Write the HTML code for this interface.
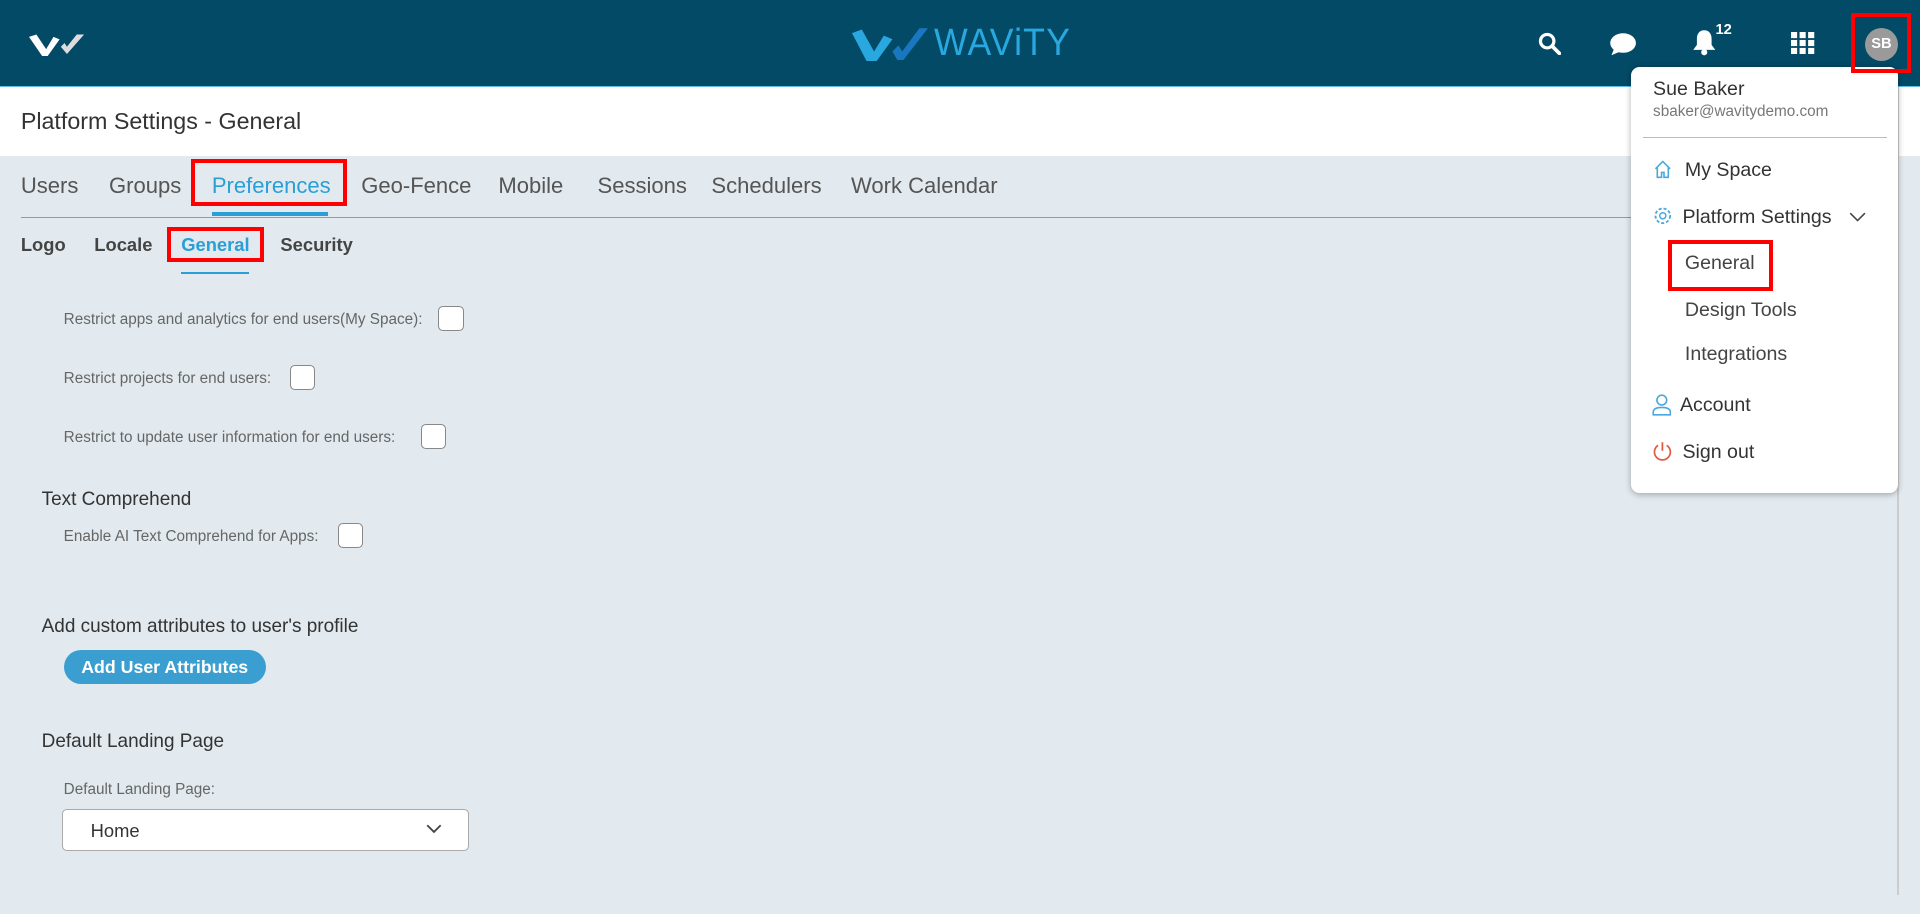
<!DOCTYPE html>
<html><head><meta charset="utf-8"><style>
html,body{margin:0;padding:0;overflow:hidden;}
body{width:1920px;height:914px;background:#e2eaef;font-family:"Liberation Sans",sans-serif;}
#w{zoom:1.22449;width:1568px;height:746px;position:relative;}
.a{position:absolute;white-space:nowrap;}
.hdr{left:0;top:0;width:1568px;height:71px;background:#034a66;border-bottom:1px solid #5bc0e8;box-sizing:border-box;}
.tb{left:0;top:71px;width:1568px;height:56px;background:#fff;}
.tab{font-size:18px;color:#555;top:141px;}
.sub{font-size:15px;color:#555;top:191px;font-weight:bold;}
.lbl{font-size:12.5px;color:#666;}
.cb{width:19px;height:19px;background:#fff;border:1px solid #888;border-radius:4px;}
.red{border:4px solid #f00;box-sizing:border-box;}
.h{font-size:15.5px;color:#333;}
.mi{font-size:16px;color:#333;}
</style></head><body><div id="w">
<div class="a hdr"></div>
<svg class="a" style="left:24px;top:26px" width="46" height="20" viewBox="0 0 46 20"><path d="M0 4l6-2 8 12 6-10 5 2-10 14h-4z" fill="#fff"/><path d="M26 12l5 6 14-16-6 0-8 10-2-3z" fill="#ddd"/></svg>
<svg class="a" style="left:696px;top:22px" width="62" height="28" viewBox="0 0 62 28"><path d="M0 5l8-3 10 18 8-13 7 3-13 18h-8z" fill="#29a8e0"/><path d="M33 20l4 7h5l20-26-7 0-14 19-3-5z" fill="#1976c0"/></svg>
<div class="a" style="left:763px;top:18px;font-size:31px;color:#29a8e0;letter-spacing:1px;transform:scaleX(0.94);transform-origin:left">WAViTY</div>
<svg class="a" style="left:1256px;top:26px" width="19" height="19" viewBox="0 0 19 19"><circle cx="7.5" cy="7.5" r="5.5" stroke="#fff" stroke-width="2.6" fill="none"/><path d="M11.5 11.5l6 6" stroke="#fff" stroke-width="3" stroke-linecap="round"/></svg>
<svg class="a" style="left:1314px;top:26px" width="23" height="20" viewBox="0 0 23 20"><ellipse cx="11.5" cy="9" rx="10.5" ry="8" fill="#fff"/><path d="M4 14l-2 5 7-3z" fill="#fff"/></svg>
<svg class="a" style="left:1382px;top:24px" width="20" height="22" viewBox="0 0 20 22"><path d="M10 1c4 0 6 3 6 7v5l3 4H1l3-4V8c0-4 2-7 6-7z" fill="#fff"/><circle cx="10" cy="19" r="2.5" fill="#fff"/></svg>
<div class="a" style="left:1401px;top:18px;font-size:12px;color:#fff;font-weight:bold">12</div>
<svg class="a" style="left:1463px;top:26px" width="19" height="18" viewBox="0 0 19 18"><g fill="#fff"><rect x="0" y="0" width="5" height="5"/><rect x="7" y="0" width="5" height="5"/><rect x="14" y="0" width="5" height="5"/><rect x="0" y="6.5" width="5" height="5"/><rect x="7" y="6.5" width="5" height="5"/><rect x="14" y="6.5" width="5" height="5"/><rect x="0" y="13" width="5" height="5"/><rect x="7" y="13" width="5" height="5"/><rect x="14" y="13" width="5" height="5"/></g></svg>
<div class="a" style="left:1523px;top:23px;width:27px;height:27px;border-radius:50%;background:#9a9a9a;color:#fff;font-size:12px;font-weight:bold;text-align:center;line-height:27px">SB</div>
<div class="a tb"></div>
<div class="a" style="left:17px;top:88px;font-size:19px;color:#333">Platform Settings - General</div>
<div class="a tab" style="left:17px">Users</div>
<div class="a tab" style="left:89px">Groups</div>
<div class="a tab" style="left:173px;color:#2a9fd6">Preferences</div>
<div class="a tab" style="left:295px">Geo-Fence</div>
<div class="a tab" style="left:407px">Mobile</div>
<div class="a tab" style="left:488px">Sessions</div>
<div class="a tab" style="left:581px">Schedulers</div>
<div class="a tab" style="left:695px">Work Calendar</div>
<div class="a" style="left:17px;top:177px;width:1533px;height:1px;background:#999"></div>
<div class="a" style="left:173px;top:173px;width:95px;height:3px;background:#2a9fd6"></div>
<div class="a red" style="left:156px;top:130px;width:127px;height:38px"></div>
<div class="a sub" style="left:17px;color:#444">Logo</div>
<div class="a sub" style="left:77px;color:#444">Locale</div>
<div class="a sub" style="left:148px;color:#2a9fd6">General</div>
<div class="a sub" style="left:229px;color:#444">Security</div>
<div class="a" style="left:148px;top:222px;width:55px;height:2px;background:#2a9fd6"></div>
<div class="a red" style="left:136px;top:185px;width:80px;height:29px"></div>
<div class="a lbl" style="left:52px;top:254px">Restrict apps and analytics for end users(My Space):</div>
<div class="a cb" style="left:358px;top:250px"></div>
<div class="a lbl" style="left:52px;top:302px">Restrict projects for end users:</div>
<div class="a cb" style="left:237px;top:298px"></div>
<div class="a lbl" style="left:52px;top:350px">Restrict to update user information for end users:</div>
<div class="a cb" style="left:344px;top:346px"></div>
<div class="a h" style="left:34px;top:399px">Text Comprehend</div>
<div class="a lbl" style="left:52px;top:431px">Enable AI Text Comprehend for Apps:</div>
<div class="a cb" style="left:276px;top:427px"></div>
<div class="a h" style="left:34px;top:503px">Add custom attributes to user's profile</div>
<div class="a" style="left:52px;top:531px;width:165px;height:28px;border-radius:14px;background:#3a9fd0;color:#fff;font-size:14.5px;font-weight:bold;text-align:center;line-height:28px">Add User Attributes</div>
<div class="a h" style="left:34px;top:597px">Default Landing Page</div>
<div class="a lbl" style="left:52px;top:638px">Default Landing Page:</div>
<div class="a" style="left:51px;top:661px;width:330px;height:32px;background:#fff;border:1px solid #aaa;border-radius:4px"></div>
<div class="a" style="left:74px;top:670px;font-size:15px;color:#333">Home</div>
<svg class="a" style="left:348px;top:673px" width="13" height="8" viewBox="0 0 13 8"><path d="M1 1l5.5 5.5L12 1" stroke="#444" stroke-width="1.5" fill="none"/></svg>
<div class="a" style="left:1549px;top:71px;width:2px;height:660px;background:#ccc"></div>
<div class="a" style="left:1332px;top:55px;width:218px;height:348px;background:#fff;border-radius:7px;box-shadow:0 1px 5px rgba(0,0,0,.3)"></div>
<div class="a mi" style="left:1350px;top:64px;font-size:16px">Sue Baker</div>
<div class="a" style="left:1350px;top:84px;font-size:12.5px;color:#777">sbaker@wavitydemo.com</div>
<div class="a" style="left:1342px;top:112px;width:199px;height:1px;background:#bbb"></div>
<svg class="a" style="left:1350px;top:130px" width="16" height="16" viewBox="0 0 16 16"><path d="M2 8l6-6 6 6M3.5 7v8h3.5v-4h2v4h3.5V7" stroke="#4aa8dd" stroke-width="1.3" fill="none"/></svg>
<div class="a mi" style="left:1376px;top:130px">My Space</div>
<svg class="a" style="left:1350px;top:168px" width="16" height="16" viewBox="0 0 16 16"><circle cx="8" cy="8" r="2.5" stroke="#4aa8dd" stroke-width="1.2" fill="none"/><circle cx="8" cy="8" r="6" stroke="#4aa8dd" stroke-width="1.5" stroke-dasharray="2.5 1.6" fill="none"/></svg>
<div class="a mi" style="left:1374px;top:168px">Platform Settings</div>
<svg class="a" style="left:1510px;top:173px" width="14" height="8" viewBox="0 0 14 8"><path d="M1 1l6 6 6-6" stroke="#444" stroke-width="1.3" fill="none"/></svg>
<div class="a mi" style="left:1376px;top:206px;color:#444">General</div>
<div class="a red" style="left:1362px;top:196px;width:86px;height:42px"></div>
<div class="a mi" style="left:1376px;top:244px;color:#444">Design Tools</div>
<div class="a mi" style="left:1376px;top:280px;color:#444">Integrations</div>
<svg class="a" style="left:1349px;top:322px" width="16" height="18" viewBox="0 0 16 18"><circle cx="8" cy="5" r="4" stroke="#4aa8dd" stroke-width="1.3" fill="none"/><path d="M1 17v-2c0-3 3-4 7-4s7 1 7 4v2z" stroke="#4aa8dd" stroke-width="1.3" fill="none"/></svg>
<div class="a mi" style="left:1372px;top:322px">Account</div>
<svg class="a" style="left:1349px;top:360px" width="17" height="17" viewBox="0 0 17 17"><path d="M5 3.5A6.5 6.5 0 1 0 12 3.5" stroke="#e05a40" stroke-width="1.4" fill="none"/><path d="M8.5 1v7" stroke="#e05a40" stroke-width="1.4"/></svg>
<div class="a mi" style="left:1374px;top:360px">Sign out</div>
<div class="a red" style="left:1512px;top:11px;width:49px;height:49px"></div>
</div></body></html>
